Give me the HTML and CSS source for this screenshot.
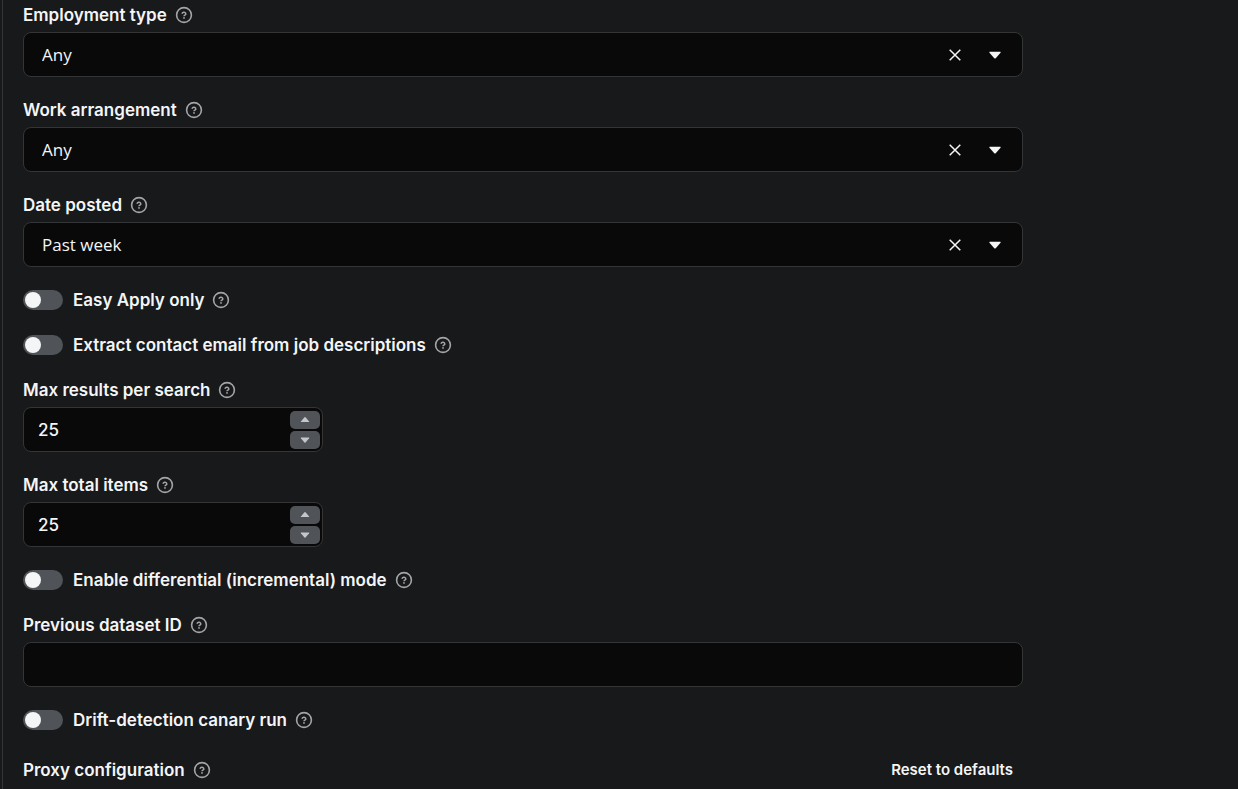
FILE: index.html
```html
<!DOCTYPE html>
<html lang="en">
<head>
    <meta charset="UTF-8">
    <meta name="viewport" content="width=device-width, initial-scale=1.0">
    <title>Input</title>
    <link rel="stylesheet" href="styles.css">
</head>
<body>

    <!-- shared icons -->
    <svg class="sprite" aria-hidden="true">
        <symbol id="help" viewBox="0 0 18 18">
            <circle cx="9" cy="9" r="7.4" fill="none" stroke="currentColor" stroke-width="1.6"/>
            <path d="M7.2 7.9a1.8 1.6 0 1 1 2.7 1.3c-.6.3-.9.5-.9 1.1" fill="none" stroke="currentColor" stroke-width="1.5"/>
            <circle cx="9" cy="11.9" r=".9" fill="currentColor"/>
        </symbol>
        <symbol id="cross" viewBox="0 0 12 12">
            <path d="M.7.7l10.6 10.6M11.3.7L.7 11.3" fill="none" stroke="currentColor" stroke-width="1.5"/>
        </symbol>
        <symbol id="down" viewBox="0 0 12 8">
            <path d="M.8.8h10.4q.8.2.3.9L6.7 7.2q-.7.7-1.4 0L.5 1.7Q0 1 .8.8z" fill="currentColor"/>
        </symbol>
        <symbol id="up" viewBox="0 0 12 8">
            <path d="M.8 6.8h10.4q.8-.2.3-.9L6.7.4q-.7-.7-1.4 0L.5 5.9q-.5.7.3.9z" fill="currentColor"/>
        </symbol>
    </svg>

    <form class="panel">
        <div class="field">
            <div class="field-head">
                <label for="employmentType">Employment type</label>
                <svg class="help"><use href="#help"/></svg>
            </div>
            <div class="control">
                <select id="employmentType"><option>Any</option></select>
                <button type="button" class="clear" aria-label="Clear"><svg><use href="#cross"/></svg></button>
                <svg class="caret"><use href="#down"/></svg>
            </div>
        </div>

        <div class="field">
            <div class="field-head">
                <label for="workArrangement">Work arrangement</label>
                <svg class="help"><use href="#help"/></svg>
            </div>
            <div class="control">
                <select id="workArrangement"><option>Any</option></select>
                <button type="button" class="clear" aria-label="Clear"><svg><use href="#cross"/></svg></button>
                <svg class="caret"><use href="#down"/></svg>
            </div>
        </div>

        <div class="field">
            <div class="field-head">
                <label for="datePosted">Date posted</label>
                <svg class="help"><use href="#help"/></svg>
            </div>
            <div class="control">
                <select id="datePosted"><option>Past week</option></select>
                <button type="button" class="clear" aria-label="Clear"><svg><use href="#cross"/></svg></button>
                <svg class="caret"><use href="#down"/></svg>
            </div>
        </div>

        <div class="toggle">
            <input type="checkbox" id="easyApply">
            <label for="easyApply">Easy Apply only</label>
            <svg class="help"><use href="#help"/></svg>
        </div>

        <div class="toggle">
            <input type="checkbox" id="extractEmail">
            <label for="extractEmail">Extract contact email from job descriptions</label>
            <svg class="help"><use href="#help"/></svg>
        </div>

        <div class="field">
            <div class="field-head">
                <label for="maxResults">Max results per search</label>
                <svg class="help"><use href="#help"/></svg>
            </div>
            <div class="control number">
                <input type="number" id="maxResults" value="25">
                <div class="stepper">
                    <button type="button" onclick="maxResults.stepUp()" aria-label="Increase"><svg><use href="#up"/></svg></button>
                    <button type="button" onclick="maxResults.stepDown()" aria-label="Decrease"><svg><use href="#down"/></svg></button>
                </div>
            </div>
        </div>

        <div class="field">
            <div class="field-head">
                <label for="maxItems">Max total items</label>
                <svg class="help"><use href="#help"/></svg>
            </div>
            <div class="control number">
                <input type="number" id="maxItems" value="25">
                <div class="stepper">
                    <button type="button" onclick="maxItems.stepUp()" aria-label="Increase"><svg><use href="#up"/></svg></button>
                    <button type="button" onclick="maxItems.stepDown()" aria-label="Decrease"><svg><use href="#down"/></svg></button>
                </div>
            </div>
        </div>

        <div class="toggle">
            <input type="checkbox" id="differential">
            <label for="differential">Enable differential (incremental) mode</label>
            <svg class="help"><use href="#help"/></svg>
        </div>

        <div class="field">
            <div class="field-head">
                <label for="datasetId">Previous dataset ID</label>
                <svg class="help"><use href="#help"/></svg>
            </div>
            <div class="control">
                <input type="text" id="datasetId">
            </div>
        </div>

        <div class="toggle">
            <input type="checkbox" id="canary">
            <label for="canary">Drift-detection canary run</label>
            <svg class="help"><use href="#help"/></svg>
        </div>

        <div class="section-head">
            <h2>Proxy configuration</h2>
            <svg class="help"><use href="#help"/></svg>
            <button type="button" class="reset">Reset to defaults</button>
        </div>
    </form>

</body>
</html>
```

FILE: styles.css
```css
* {
    box-sizing: border-box;
}

body {
    margin: 0;
    padding-left: 2px;
    background: #17191a;
    color: #f4f5f7;
    font-family: Inter, sans-serif;
    font-size: 17px;
    font-weight: 600;
    line-height: 20px;
}

input, select, button {
    margin: 0;
    padding: 0;
    border: none;
    background: none;
    color: inherit;
    font: inherit;
}

button {
    cursor: pointer;
}

.sprite {
    position: absolute;
    width: 0;
    height: 0;
}

.panel {
    min-height: 100vh;
    padding: 5px 20px 9px;
    border-left: 1px solid #333537;
}

.field, .toggle, .section-head {
    max-width: 1000px;
}

.field {
    margin-bottom: 23px;
}

.field-head, .toggle, .section-head {
    display: flex;
    align-items: center;
}

.field-head {
    margin-bottom: 7px;
}

.help {
    flex: none;
    width: 18px;
    height: 18px;
    margin-left: 8px;
    color: #a3a5a8;
}

/* boxes */
.control {
    display: flex;
    align-items: center;
    height: 45px;
    border: 1px solid #333537;
    border-radius: 8px;
    background: #090909;
}

.control select {
    flex: 1;
    height: 100%;
    padding-left: 18px;
    appearance: none;
    font-family: "Open Sans", sans-serif;
    font-weight: 400;
    outline: none;
}

.control input {
    flex: 1;
    min-width: 0;
    height: 100%;
    padding-left: 14px;
    font-weight: 500;
    outline: none;
}

.clear {
    display: flex;
    padding: 10px;
}

.clear svg {
    width: 12px;
    height: 12px;
}

.caret {
    width: 12px;
    height: 8px;
    margin: 1px 21px 0 18px;
}

/* number inputs */
.number {
    max-width: 300px;
    padding-right: 2px;
}

.number input {
    appearance: textfield;
}

.number input::-webkit-inner-spin-button {
    display: none;
}

.stepper {
    display: grid;
    gap: 2px;
}

.stepper button {
    display: flex;
    align-items: center;
    justify-content: center;
    width: 30px;
    height: 18px;
    border-radius: 5px;
    background: #505357;
    color: #c4c6ca;
}

.stepper svg {
    width: 10px;
    height: 6px;
}

/* switches */
.toggle {
    margin-bottom: 25px;
}

.toggle input {
    flex: none;
    width: 40px;
    height: 20px;
    margin-right: 10px;
    padding: 2px;
    appearance: none;
    border-radius: 10px;
    background: #505357;
    cursor: pointer;
}

.toggle input::before {
    content: "";
    display: block;
    width: 16px;
    height: 16px;
    border-radius: 50%;
    background: #f4f5f7;
}

.toggle input:checked::before {
    margin-left: 20px;
}

.section-head {
    margin-top: 30px;
}

.section-head h2 {
    margin: 0;
    font-size: 17px;
    font-weight: 600;
}

.reset {
    margin-left: auto;
    padding-right: 10px;
    font-size: 15px;
}
```
